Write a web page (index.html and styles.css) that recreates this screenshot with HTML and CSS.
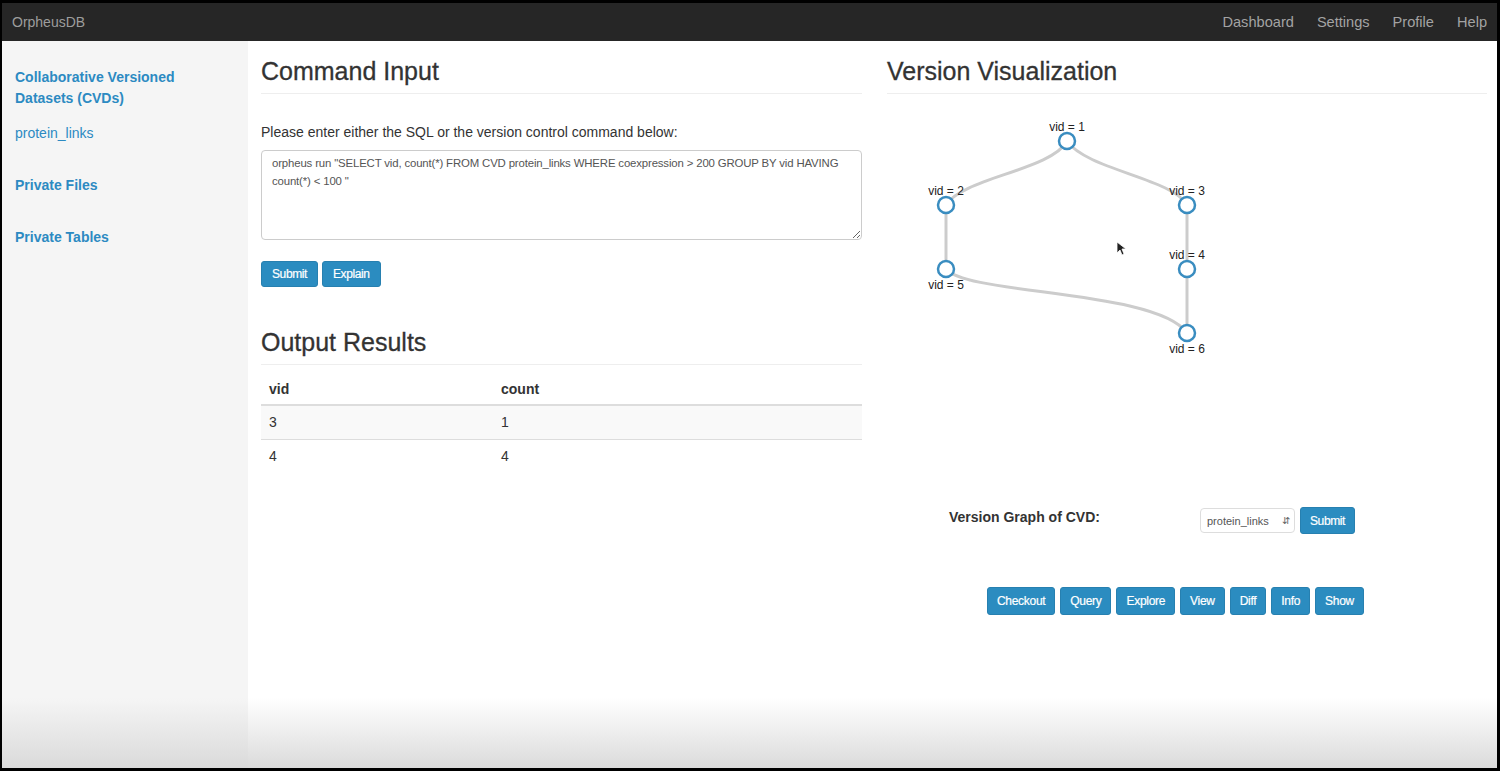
FILE: index.html
```html
<!DOCTYPE html>
<html lang="en">
<head>
    <meta charset="UTF-8">
    <title>OrpheusDB</title>
    <link rel="stylesheet" href="styles.css">
</head>
<body>
<div class="page">

<!-- Top navbar -->
<div class="navbar">
    <span class="brand">OrpheusDB</span>
    <div class="nav-links">
        <a href="#">Dashboard</a>
        <a href="#">Settings</a>
        <a href="#">Profile</a>
        <a href="#">Help</a>
    </div>
</div>

<div class="layout">
    <!-- Sidebar -->
    <div class="sidebar">
        <a class="side-title" href="#">Collaborative Versioned Datasets (CVDs)</a>
        <a class="side-item" href="#">protein_links</a>
        <a class="side-title" href="#">Private Files</a>
        <a class="side-title" href="#">Private Tables</a>
    </div>

    <div class="main">
        <!-- Left column -->
        <div class="col">
            <h2 class="page-header">Command Input</h2>
            <p class="hint">Please enter either the SQL or the version control command below:</p>
            <textarea class="cmd">orpheus run "SELECT vid, count(*) FROM CVD protein_links WHERE coexpression &gt; 200 GROUP BY vid HAVING count(*) &lt; 100 "</textarea>
            <div class="btn-row">
                <button class="btn">Submit</button>
                <button class="btn">Explain</button>
            </div>

            <h2 class="page-header results">Output Results</h2>
            <table class="table">
                <thead>
                    <tr><th class="first">vid</th><th>count</th></tr>
                </thead>
                <tbody>
                    <tr class="odd"><td>3</td><td>1</td></tr>
                    <tr><td>4</td><td>4</td></tr>
                </tbody>
            </table>
        </div>

        <!-- Right column -->
        <div class="col">
            <h2 class="page-header">Version Visualization</h2>
            <svg class="graph" width="600" height="385" viewBox="0 0 600 385">
                <g class="links">
                    <path d="M180 41 C 165 70, 75 78, 59 105"/>
                    <path d="M180 41 C 200 70, 285 78, 300 105"/>
                    <path d="M59 105 L59 169"/>
                    <path d="M300 105 L300 169"/>
                    <path d="M300 169 L300 233"/>
                    <path d="M59 169 C 80 195, 270 190, 300 233"/>
                </g>
                <g class="nodes">
                    <circle cx="180" cy="41" r="8"/>
                    <circle cx="59" cy="105" r="8"/>
                    <circle cx="300" cy="105" r="8"/>
                    <circle cx="59" cy="169" r="8"/>
                    <circle cx="300" cy="169" r="8"/>
                    <circle cx="300" cy="233" r="8"/>
                </g>
                <g class="labels">
                    <text x="180" y="31">vid = 1</text>
                    <text x="59" y="95">vid = 2</text>
                    <text x="300" y="95">vid = 3</text>
                    <text x="300" y="159">vid = 4</text>
                    <text x="59" y="189">vid = 5</text>
                    <text x="300" y="253">vid = 6</text>
                </g>
                <!-- mouse pointer -->
                <path class="cursor" d="M230 142 L230 153 L233 150 L235 155 L237 154 L235 149 L239 149 Z"/>
            </svg>

            <div class="cvd-form">
                <label class="cvd-label">Version Graph of CVD:</label>
                <div class="select"><span>protein_links</span><span class="arrows">&#8693;</span></div>
                <button class="btn">Submit</button>
            </div>

            <div class="actions">
                <button class="btn">Checkout</button>
                <button class="btn">Query</button>
                <button class="btn">Explore</button>
                <button class="btn">View</button>
                <button class="btn">Diff</button>
                <button class="btn">Info</button>
                <button class="btn">Show</button>
            </div>
        </div>
    </div>
</div>

<div class="fade"></div>
</div>
</body>
</html>
```

FILE: styles.css
```css
* { box-sizing: border-box; }
html, body { margin: 0; height: 100%; }
body { background: #000; padding: 3px 3px 3px 2px; font-family: "Liberation Sans", Arial, sans-serif; font-size: 14px; color: #333; }

.page { position: relative; height: 765px; background: #fff; display: flex; flex-direction: column; overflow: hidden; }

.navbar { height: 38px; background: #262626; display: flex; align-items: center; justify-content: space-between; padding: 0 10px 0 10px; flex-shrink: 0; }
.brand { color: #9d9d9d; font-size: 14px; }
.nav-links { display: flex; gap: 23px; }
.nav-links a { color: #a3a3a3; text-decoration: none; font-size: 14.6px; }

.layout { flex: 1; display: flex; }
.sidebar { width: 246px; background: #f5f5f5; padding: 26px 13px; display: flex; flex-direction: column; }
.sidebar a { color: #2c8ac2; text-decoration: none; line-height: 21px; }
.side-title { font-weight: bold; margin-bottom: 14px; }
.side-item { margin-bottom: 31px; }
.sidebar .side-title + .side-title { margin-top: 17px; }

.main { flex: 1; display: flex; gap: 25px; padding: 17px 10px 0 13px; }
.col { width: 601px; }
.col + .col { width: 600px; }

.page-header { font-size: 25px; font-weight: normal; line-height: 26px; margin: 0; padding-bottom: 9px; border-bottom: 1px solid #eee; color: #333; -webkit-text-stroke: 0.3px #333; }
.hint { margin: 28px 0 8px; line-height: 20px; }
.cmd { display: block; width: 601px; height: 90px; resize: vertical; border: 1px solid #ccc; border-radius: 4px; padding: 3px 10px; font-family: "Liberation Sans", Arial, sans-serif; font-size: 11.4px; letter-spacing: -0.15px; line-height: 18px; color: #555; }

.btn { background: #2b8cc0; color: #fff; border: 1px solid #2780b0; border-radius: 3px; font-family: "Liberation Sans", Arial, sans-serif; font-size: 12px; letter-spacing: -0.4px; height: 26px; padding: 0 9px; cursor: pointer; -webkit-text-stroke: 0.2px #fff; }
.btn-row { margin-top: 21px; display: flex; gap: 4px; }
.btn-row .btn { padding: 0 10px; }

.results { margin-top: 42px; }

.table { width: 100%; border-collapse: collapse; margin-top: 7px; }
.table th { text-align: left; padding: 7px 8px 5px; line-height: 20px; border-bottom: 2px solid #ddd; }
.table th.first { width: 232px; }
.table td { padding: 6px 8px 7px; line-height: 20px; border-top: 1px solid #ddd; }
.table tr.odd td { background: #f9f9f9; }

.graph { display: block; margin-top: 6px; }
.links path { fill: none; stroke: #ccc; stroke-width: 3; }
.nodes circle { fill: #fff; stroke: #3a8dc0; stroke-width: 2.5; }
.labels text { font-family: "Liberation Sans", Arial, sans-serif; font-size: 12px; fill: #222; text-anchor: middle; }
.cursor { fill: #222; stroke: #fff; stroke-width: 0.8; }

.cvd-form { display: flex; align-items: center; padding-left: 62px; margin-top: 22px; }
.cvd-label { width: 251px; font-weight: bold; margin-top: -8px; }
.select { width: 95px; height: 25px; border: 1px solid #ddd; border-radius: 4px; display: flex; align-items: center; justify-content: space-between; padding: 0 4px 0 6px; font-size: 11px; color: #555; margin-right: 5px; }
.arrows { font-size: 10px; color: #666; }
.cvd-form .btn { height: 27px; padding: 0 9px; }

.actions { display: flex; gap: 5px; padding-left: 100px; margin-top: 53px; }
.actions .btn { height: 28px; padding: 0 9px; letter-spacing: -0.3px; }

.fade { position: absolute; left: 0; right: 0; bottom: 0; height: 70px; background: linear-gradient(to bottom, rgba(220,220,220,0), rgba(215,215,215,0.9)); pointer-events: none; }
```
